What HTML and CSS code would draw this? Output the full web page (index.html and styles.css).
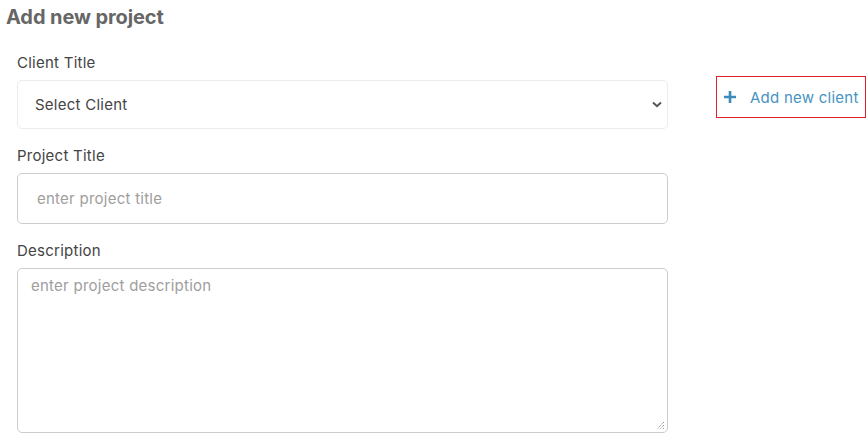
FILE: index.html
```html
<!DOCTYPE html>
<html>
<head>
<meta charset="utf-8">
<link rel="stylesheet" href="styles.css">
</head>
<body>
<div class="page">
  <h1 class="title">Add new project</h1>
  <div class="row">
    <form class="form">
      <label class="label first">Client Title</label>
      <div class="select">
        <span>Select Client</span>
        <svg class="chev" width="10" height="7" viewBox="0 0 10 7"><path d="M1 1.5 L5 5.2 L9 1.5" fill="none" stroke="#555" stroke-width="2"/></svg>
      </div>
      <label class="label">Project Title</label>
      <div class="input"><span class="ph">enter project title</span></div>
      <label class="label">Description</label>
      <div class="textarea">
        <span class="ph">enter project description</span>
        <svg class="grip" width="10" height="10" viewBox="0 0 10 10"><path d="M9 2 L2 9 M9 5 L5 9 M9 8 L8 9" stroke="#777" stroke-width="1" stroke-dasharray="1 1" fill="none"/></svg>
      </div>
    </form>
    <div class="side">
      <button class="add" type="button">
        <svg width="12" height="12" viewBox="0 0 12 12"><path d="M6 0 V12 M0 6 H12" stroke="#3a8bbb" stroke-width="2.6"/></svg>
        <span>Add new client</span>
      </button>
    </div>
  </div>
</div>
</body>
</html>
```
FILE: styles.css
```css
* { box-sizing: border-box; }
html, body { margin: 0; background: #fff; }
body { font-family: Inter, "Noto Sans", sans-serif; }
.page { padding: 5px 0 0 6px; }
.title { margin: 0; font-size: 20px; font-weight: 700; color: #666; line-height: 24px; letter-spacing: -0.1px; }
.row { display: flex; align-items: flex-start; }
.form { width: 662px; padding-left: 11px; display: flex; flex-direction: column; }
.label { font-size: 15px; color: #444; line-height: 18px; margin-top: 18px; margin-bottom: 8px; letter-spacing: 0.25px; }
.label.first { margin-top: 25px; }
.select { height: 49px; border: 1px solid #ececec; border-radius: 5px; display: flex; align-items: center; justify-content: space-between; padding: 0 5px 0 17px; font-size: 15px; color: #444; letter-spacing: 0.25px; }
.input { height: 51px; border: 1px solid #ccc; border-radius: 5px; display: flex; align-items: center; padding-left: 19px; font-size: 15px; letter-spacing: 0.25px; }
.ph { color: #9e9e9e; }
.textarea { height: 165px; border: 1px solid #ccc; border-radius: 5px; padding: 7px 13px; font-size: 15px; position: relative; letter-spacing: 0.25px; }
.grip { position: absolute; right: 2px; bottom: 2px; }
.side { padding-left: 48px; padding-top: 47px; }
.add { width: 150px; height: 42px; border: 1px solid #e0202a; background: #fff; display: flex; align-items: center; gap: 14px; padding: 0 0 0 7px; font-family: Inter, "Noto Sans", sans-serif; font-size: 15px; color: #4793c1; cursor: pointer; letter-spacing: 0.25px; }
```
